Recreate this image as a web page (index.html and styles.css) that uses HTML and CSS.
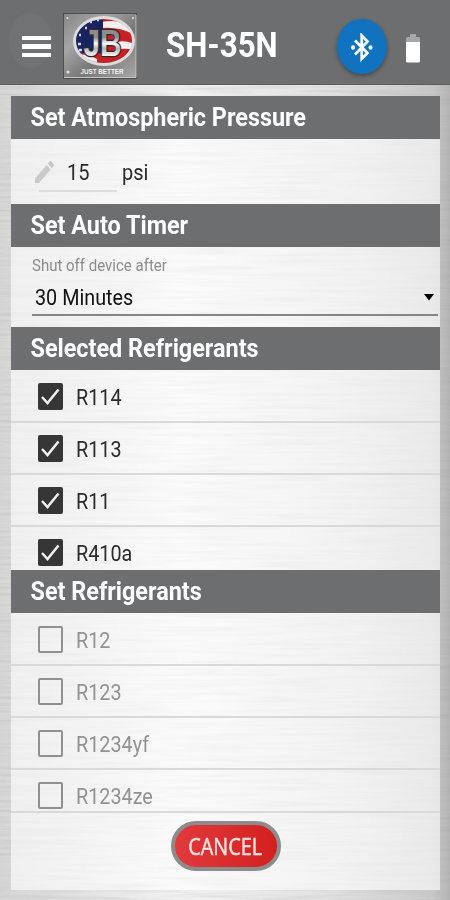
FILE: index.html
```html
<!DOCTYPE html>
<html lang="en">
<head>
  <meta charset="UTF-8" />
  <meta name="viewport" content="width=device-width, initial-scale=1.0"/>
  <title>SH-35N</title>
  <link rel="stylesheet" href="styles.css">
</head>
<body>

  <!-- Brushed metal grain -->
  <svg class="grain" width="450" height="900">
    <filter id="brushed" x="0" y="0" width="100%" height="100%">
      <feTurbulence type="fractalNoise" baseFrequency="0.012 0.3" numOctaves="3" seed="4"/>
      <feColorMatrix values="0 0 0 0 0.35  0 0 0 0 0.35  0 0 0 0 0.35  0.5 0 0 0 -0.2"/>
    </filter>
    <rect width="450" height="900" filter="url(#brushed)"/>
  </svg>

  <header class="topbar">
    <button class="menu" aria-label="Menu"><i></i><i></i><i></i></button>
    <svg class="logo" width="74" height="66" viewBox="0 0 74 66">
      <defs>
        <linearGradient id="plate" x1="0" y1="0" x2="1" y2="1">
          <stop offset="0" stop-color="#858585"/>
          <stop offset=".3" stop-color="#a6a6a6"/>
          <stop offset=".6" stop-color="#777"/>
          <stop offset="1" stop-color="#a9a9a9"/>
        </linearGradient>
        <linearGradient id="chrome" x1="0" y1="0" x2="0" y2="1">
          <stop offset="0" stop-color="#888"/>
          <stop offset=".35" stop-color="#8e8e8e"/>
          <stop offset=".5" stop-color="#fafafa"/>
          <stop offset=".62" stop-color="#b5b5b5"/>
          <stop offset=".8" stop-color="#f4f4f4"/>
        </linearGradient>
        <clipPath id="oval"><ellipse cx="41" cy="28" rx="29" ry="22"/></clipPath>
      </defs>
      <rect x=".5" y=".5" width="73" height="65" fill="url(#plate)" stroke="#4e4e4e"/>
      <path d="M1 64.500h72V2" fill="none" stroke="#c4c4c4"/>
      <g clip-path="url(#oval)">
        <rect x="10" y="4" width="62" height="50" fill="#c91f26"/>
        <path d="M38 9q20-4 34 7v6q-16-9-34-7zM54 29q8-2 18 2v7q-9-4-18-1zM10 42q14-2 24 4v3q-12 2-24-3z" fill="#f3efef"/>
        <path d="M10 4h30v37q-15-5-30 3z" fill="#18235f"/>
        <path d="M16 22h2M22 15h2M15 31h3M27 9h2M16 37h3M34 7h2" stroke="#cfd5ee" stroke-width="2.500"/>
      </g>
      <ellipse cx="41" cy="28" rx="29.500" ry="23.500" fill="none" stroke="#dcdcdc" stroke-width="3"/>
      <text class="logo-jb" x="39.500" y="43" textLength="38" lengthAdjust="spacingAndGlyphs" fill="url(#chrome)">JB</text>
      <text class="logo-tag" x="39" y="61" textLength="43" lengthAdjust="spacingAndGlyphs">JUST BETTER</text>
      <g fill="#e4e4e4"><circle cx="4.500" cy="5" r="1"/><circle cx="70" cy="5" r="1"/><circle cx="5" cy="59" r="1.500"/></g>
    </svg>
    <h1 class="title"><span class="tall">SH-35N</span></h1>
    <div class="bluetooth">
      <svg width="24" height="30" viewBox="0 0 24 30">
        <path d="M5 7.500 17.500 20 11.700 26V2.500l5.800 6L5 21.500" fill="none" stroke="#fff" stroke-width="2.700"/>
        <ellipse cx="3" cy="14.500" rx="2" ry="2.200" fill="#fff"/>
        <ellipse cx="20.500" cy="14.500" rx="2" ry="2.200" fill="#fff"/>
      </svg>
    </div>
    <svg class="battery" width="14" height="29" viewBox="0 0 14 29">
      <path d="M4 0h6v3h2.500q1.500 0 1.500 1.500V9H0V4.500Q0 3 1.500 3H4z" fill="#a5a6a7"/>
      <path d="M0 8h14v19q0 1.500-1.500 1.500h-11Q0 28.500 0 27z" fill="#fff"/>
    </svg>
  </header>

  <main class="panel">
    <h2 class="bar"><span class="tall">Set Atmospheric Pressure</span></h2>
    <div class="pressure">
      <svg class="pencil" width="19" height="22" viewBox="3 3 18 18" preserveAspectRatio="none">
        <path d="M3 17.250V21h3.750L17.810 9.940l-3.750-3.750L3 17.250zM20.710 7.040a1 1 0 0 0 0-1.410l-2.340-2.340a1 1 0 0 0-1.410 0l-1.830 1.830 3.750 3.750 1.830-1.830z" fill="#c9c9c9"/>
      </svg>
      <span class="value"><span class="tall">15</span></span>
      <span class="tall">psi</span>
    </div>

    <h2 class="bar"><span class="tall">Set Auto Timer</span></h2>
    <div class="timer">
      <label class="hint"><span class="tall">Shut off device after</span></label>
      <div class="select">
        <span class="tall">30 Minutes</span>
        <svg width="10" height="7" viewBox="0 0 10 7"><path d="M0 0h10L5 6.500z"/></svg>
      </div>
    </div>

    <h2 class="bar"><span class="tall">Selected Refrigerants</span></h2>
    <ul class="list list-selected">
      <li><span class="box checked"><svg viewBox="0 0 25 27"><path d="M4 14l5.500 6L20.500 6.500"/></svg></span><span class="tall">R114</span></li>
      <li><span class="box checked"><svg viewBox="0 0 25 27"><path d="M4 14l5.500 6L20.500 6.500"/></svg></span><span class="tall">R113</span></li>
      <li><span class="box checked"><svg viewBox="0 0 25 27"><path d="M4 14l5.500 6L20.500 6.500"/></svg></span><span class="tall">R11</span></li>
      <li><span class="box checked"><svg viewBox="0 0 25 27"><path d="M4 14l5.500 6L20.500 6.500"/></svg></span><span class="tall">R410a</span></li>
    </ul>

    <h2 class="bar"><span class="tall">Set Refrigerants</span></h2>
    <ul class="list list-available">
      <li><span class="box"></span><span class="tall">R12</span></li>
      <li><span class="box"></span><span class="tall">R123</span></li>
      <li><span class="box"></span><span class="tall">R1234yf</span></li>
      <li><span class="box"></span><span class="tall">R1234ze</span></li>
    </ul>

    <div class="actions">
      <button class="cancel"><span>CANCEL</span></button>
    </div>
  </main>

</body>
</html>
```

FILE: styles.css
```css
* {
  box-sizing: border-box;
}

body {
  margin: 0;
  height: 900px;
  overflow: hidden;
  background: linear-gradient(to right, #d6d6d6, #f2f2f2 40%, #e0e0e0 75%, #c9c9c9 96%, #b4b4b4);
  font-family: Roboto, "Liberation Sans", sans-serif;
  color: #2a2a2a;
}

h1, h2, ul {
  margin: 0;
  padding: 0;
}

button {
  border: none;
  padding: 0;
  font-family: inherit;
}

.grain {
  position: absolute;
  top: 0;
  left: 0;
  z-index: -1;
}

/* slightly stretched lettering */
.tall {
  display: inline-block;
  transform: scaleY(1.12);
}

.topbar {
  display: flex;
  align-items: center;
  height: 85px;
  padding: 0 0 0 9px;
  background: #6c6e70;
  border-bottom: 1px solid #5c5e60;
}

.menu {
  display: flex;
  flex-direction: column;
  justify-content: center;
  gap: 4px;
  width: 43px;
  height: 55px;
  margin-top: -3px;
  padding: 12px 0 0 13px;
  border-radius: 50%;
  background: #717274;
}

.menu i {
  width: 29px;
  height: 4.500px;
  background: #fff;
}

.logo {
  margin: 7px 0 0 11px;
}

.logo-jb {
  font: bold 37px "Liberation Sans", sans-serif;
  text-anchor: middle;
  stroke: #2c2c2c;
  stroke-width: 2.500;
  stroke-linejoin: round;
  paint-order: stroke;
}

.logo-tag {
  font: bold 7px "Liberation Sans", sans-serif;
  text-anchor: middle;
  fill: #f2f2f2;
}

.title {
  width: 171px;
  margin: 7px 0 0 29px;
  font-size: 31.300px;
  line-height: 40px;
  color: #fff;
}

.bluetooth {
  display: flex;
  align-items: center;
  justify-content: center;
  width: 50px;
  height: 55px;
  margin-top: 8px;
  padding-top: 3px;
  border-radius: 50%;
  background: #1173c0;
  box-shadow: 0 2px 4px rgba(0,0,0,0.35);
}

.battery {
  margin: 12px 0 0 19px;
}

.panel {
  width: 429px;
  height: 794px;
  margin: 11px 0 0 11px;
  background: rgba(255,255,255,0.62);
}

.bar {
  height: 43px;
  padding-left: 19.500px;
  background: #6c6e70;
  color: #fff;
  font-size: 23.400px;
  line-height: 43px;
}

.pressure {
  display: flex;
  align-items: center;
  height: 65px;
  padding-left: 24px;
  font-size: 20px;
}

.value {
  width: 78px;
  height: 40px;
  margin: 1px 5px 0 -15px;
  padding-left: 28px;
  line-height: 40px;
  border-bottom: 2px solid #dcdcdc;
}

.timer {
  height: 80px;
  padding: 8px 2px 0 21px;
}

.hint {
  display: block;
  font-size: 15px;
  line-height: 20px;
  color: #8b8b8b;
}

.select {
  display: flex;
  align-items: center;
  justify-content: space-between;
  height: 41px;
  padding: 5px 4px 0 3px;
  border-bottom: 2px solid #858585;
  color: #111;
  font-size: 19.800px;
}

.list {
  overflow: hidden;
  padding-top: 1px;
  list-style: none;
  font-size: 19.800px;
}

.list li {
  display: flex;
  align-items: center;
  gap: 13px;
  height: 52px;
  padding: 2px 0 0 27px;
  border-bottom: 2px solid #d9d9d9;
}

.list-selected {
  height: 200px;
}

.list-available {
  height: 200px;
  border-bottom: 2px solid #d9d9d9;
  color: #929292;
}

.box {
  width: 25px;
  height: 27px;
  margin-bottom: 2px;
  border: 2px solid #909090;
  border-radius: 2px;
}

.checked {
  border: none;
  background: #363636;
}

.checked svg {
  display: block;
  fill: none;
  stroke: #f2f2f2;
  stroke-width: 2.500;
}

.actions {
  display: flex;
  justify-content: center;
  padding-top: 8px;
}

.cancel {
  width: 110px;
  height: 50px;
  border: 4px solid #8c8c8c;
  border-radius: 25px;
  background: linear-gradient(to right, #e23a3e, #d3201f);
  color: #ffe3e0;
  font-family: "Open Sans", sans-serif;
  font-size: 20px;
  -webkit-text-stroke: 0.4px #ffe3e0;
}

.cancel span {
  display: inline-block;
  transform: scale(0.99, 1.15);
}
```
